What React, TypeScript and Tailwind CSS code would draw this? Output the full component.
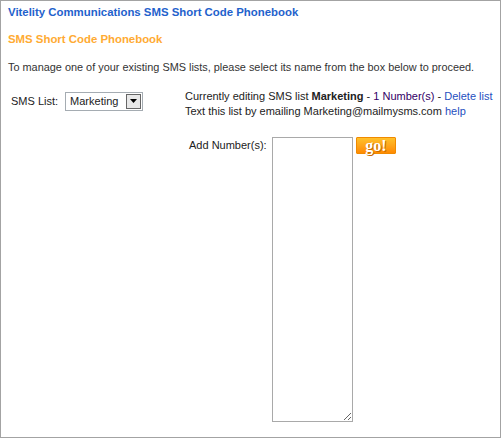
import React from "react";

const App = () => {
  return (
    <div className="w-[501px] h-[438px] bg-white border border-[#a3a3a3] font-['Liberation_Sans',Arial,sans-serif] text-[11px] text-[#333333] overflow-hidden">
      <div className="px-[7px] pt-[4px]">
        <h1 className="text-[11.4px] leading-[14px] font-bold text-[#1f62cc]">
          Vitelity Communications SMS Short Code Phonebook
        </h1>
        <h2 className="mt-[13px] text-[11.4px] leading-[14px] font-bold text-[#ffab33]">
          SMS Short Code Phonebook
        </h2>
        <p className="mt-[14px] leading-[14px] text-[10.9px]">
          To manage one of your existing SMS lists, please select its name from the box below to proceed.
        </p>
      </div>

      <div className="flex mt-[15px]">
        <div className="flex items-center h-[18px] mt-[3px] pl-[10px] w-[184px]">
          <span className="text-[#222]">SMS List:</span>
          <div className="ml-[7px] w-[78px] h-[19px] border border-[#a5acb2] flex items-center justify-between pl-[4px] pr-[1px]">
            <span className="text-[#222]">Marketing</span>
            <div className="w-[15px] h-[15px] border border-[#666] bg-[#e8e8e8] flex items-center justify-center">
              <svg width="7" height="4" viewBox="0 0 7 4">
                <path d="M0 0h7L3.5 4z" fill="#000" />
              </svg>
            </div>
          </div>
        </div>
        <div className="leading-[15px] text-[#222]">
          <div>
            Currently editing SMS list <b>Marketing</b> -{" "}
            <span className="text-[#330066]">1 Number(s)</span> -{" "}
            <a className="text-[#1f4fc0]">Delete list</a>
          </div>
          <div>
            Text this list by emailing Marketing@mailmysms.com{" "}
            <a className="text-[#1f4fc0]">help</a>
          </div>
        </div>
      </div>

      <div className="flex mt-[18px] pl-[188px]">
        <span className="mt-[1px] leading-[14px] text-[#222] w-[83px]">Add Number(s):</span>
        <textarea className="w-[81px] h-[285px] border border-[#a9a9a9] bg-white outline-none" />
        <button className="ml-[3px] w-[40px] h-[17px] rounded-[1px] border border-[#f08a00] bg-gradient-to-b from-[#ffc02a] to-[#ff8a00] flex items-center justify-center">
          <span className="font-['Liberation_Serif',serif] font-bold text-[16px] leading-[15px] text-white [text-shadow:1px_1px_0_#c66a00]">
            go!
          </span>
        </button>
      </div>
    </div>
  );
};

export default App;
